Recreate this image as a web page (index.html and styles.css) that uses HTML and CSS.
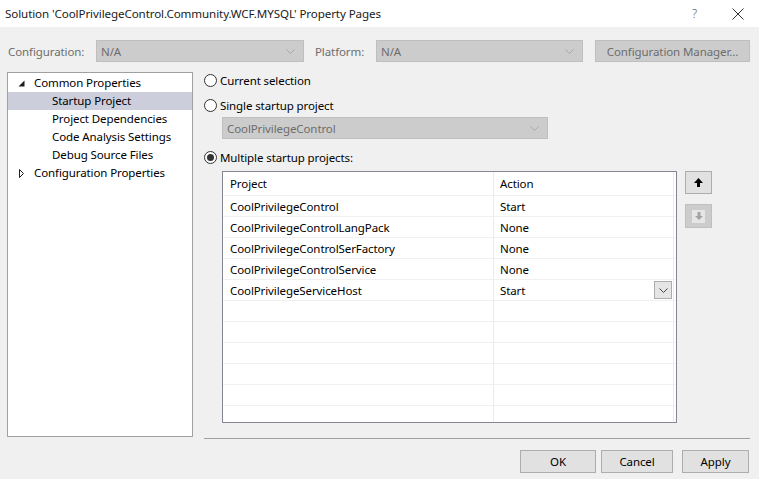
FILE: index.html
```html
<!DOCTYPE html>
<html>
<head>
<meta charset="utf-8">
<link rel="stylesheet" href="styles.css">
</head>
<body>
<div class="window">
  <div class="titlebar">
    <span class="title">Solution 'CoolPrivilegeControl.Community.WCF.MYSQL' Property Pages</span>
    <span class="help">?</span>
    <svg class="close" width="12" height="12" viewBox="0 0 12 12"><path d="M0.5 0.5 L11.5 11.5 M11.5 0.5 L0.5 11.5" stroke="#333" stroke-width="1" fill="none"/></svg>
  </div>

  <div class="toolbar">
    <span class="lbl lbl-cfg">Configuration:</span>
    <div class="combo combo-dis combo-cfg"><span>N/A</span><svg class="chev" width="9" height="5" viewBox="0 0 9 5"><path d="M0.5 0.5 L4.5 4.5 L8.5 0.5" stroke="#a8a8a8" fill="none"/></svg></div>
    <span class="lbl lbl-plat">Platform:</span>
    <div class="combo combo-dis combo-plat"><span>N/A</span><svg class="chev" width="9" height="5" viewBox="0 0 9 5"><path d="M0.5 0.5 L4.5 4.5 L8.5 0.5" stroke="#a8a8a8" fill="none"/></svg></div>
    <div class="btn btn-dis btn-cm">Configuration Manager...</div>
  </div>

  <div class="main">
    <div class="tree">
      <div class="node lvl0"><svg class="exp" width="7" height="7" viewBox="0 0 7 7"><path d="M6.5 0.5 L6.5 6.5 L0.5 6.5 Z" fill="#1e1e1e"/></svg>Common Properties</div>
      <div class="node lvl1 sel">Startup Project</div>
      <div class="node lvl1">Project Dependencies</div>
      <div class="node lvl1">Code Analysis Settings</div>
      <div class="node lvl1">Debug Source Files</div>
      <div class="node lvl0"><svg class="exp" width="7" height="9" viewBox="0 0 7 9"><path d="M1.5 0.5 L5.5 4.5 L1.5 8.5 Z" fill="none" stroke="#1e1e1e"/></svg>Configuration Properties</div>
    </div>

    <div class="right">
      <div class="radio r1"><span class="dot"></span>Current selection</div>
      <div class="radio r2"><span class="dot"></span>Single startup project</div>
      <div class="combo combo-dis combo-single"><span>CoolPrivilegeControl</span><svg class="chev" width="9" height="5" viewBox="0 0 9 5"><path d="M0.5 0.5 L4.5 4.5 L8.5 0.5" stroke="#a8a8a8" fill="none"/></svg></div>
      <div class="radio r3"><span class="dot on"></span>Multiple startup projects:</div>

      <div class="gridarea">
        <div class="grid">
          <div class="row head"><div class="c1">Project</div><div class="c2">Action</div></div>
          <div class="row"><div class="c1">CoolPrivilegeControl</div><div class="c2">Start</div></div>
          <div class="row"><div class="c1">CoolPrivilegeControlLangPack</div><div class="c2">None</div></div>
          <div class="row"><div class="c1">CoolPrivilegeControlSerFactory</div><div class="c2">None</div></div>
          <div class="row"><div class="c1">CoolPrivilegeControlService</div><div class="c2">None</div></div>
          <div class="row"><div class="c1">CoolPrivilegeServiceHost</div><div class="c2 has-dd">Start<span class="dd"><svg width="9" height="5" viewBox="0 0 9 5"><path d="M0.5 0.5 L4.5 4.5 L8.5 0.5" stroke="#444" fill="none"/></svg></span></div></div>
          <div class="row"><div class="c1"></div><div class="c2"></div></div>
          <div class="row"><div class="c1"></div><div class="c2"></div></div>
          <div class="row"><div class="c1"></div><div class="c2"></div></div>
          <div class="row"><div class="c1"></div><div class="c2"></div></div>
          <div class="row"><div class="c1"></div><div class="c2"></div></div>
          <div class="row"><div class="c1"></div><div class="c2"></div></div>
        </div>
        <div class="movers">
          <div class="mv mv-up"><svg width="9" height="9" viewBox="0 0 9 9"><path d="M4.5 0 L9 5 H6 V9 H3 V5 H0 Z" fill="#000"/></svg></div>
          <div class="mv mv-down"><span class="inner"><svg width="8" height="8" viewBox="0 0 8 8"><path d="M4 8 L8 4 H5.5 V0 H2.5 V4 H0 Z" fill="#a3a3a3"/></svg></span></div>
        </div>
      </div>

      <div class="sep"></div>
    </div>
  </div>

  <div class="footer">
    <div class="btn btn-ok">OK</div>
    <div class="btn btn-cancel">Cancel</div>
    <div class="btn btn-apply">Apply</div>
  </div>
</div>
</body>
</html>
```
FILE: styles.css
```css
* { box-sizing: border-box; }
html, body { margin: 0; padding: 0; }
body {
  background: #f0f0f0;
  font-family: "Segoe UI", "Noto Sans", "Open Sans", sans-serif;
  font-size: 11.5px;
  letter-spacing: -0.1px;
  color: #000;
  width: 759px;
  height: 479px;
  overflow: hidden;
}
.window { width: 759px; height: 479px; display: flex; flex-direction: column; }

.titlebar {
  height: 27px;
  background: #fff;
  display: flex;
  align-items: center;
  padding-left: 5px;
}
.title { flex: 1; color: #1a1a1a; white-space: nowrap; font-size: 11.6px; }
.help { color: #555; margin-right: 35px; font-size: 12px; font-weight: 300; }
.close { margin-right: 15px; }

.toolbar {
  margin-top: 13px;
  height: 22px;
  display: flex;
  align-items: center;
}
.lbl { color: #6d6d6d; white-space: nowrap; }
.lbl-cfg { margin-left: 8px; width: 88px; }
.lbl-plat { margin-left: 11px; width: 61px; }
.combo {
  height: 22px;
  display: flex;
  align-items: center;
  justify-content: space-between;
  padding: 0 8px 0 4px;
  border: 1px solid #bfbfbf;
}
.combo-dis { background: #cccccc; color: #6d6d6d; }
.combo-cfg { width: 208px; }
.combo-plat { width: 207px; }
.combo-single { width: 326px; margin-left: 18px; height: 22px; }
.btn {
  height: 23px;
  display: flex;
  align-items: center;
  justify-content: center;
  border: 1px solid #adadad;
  background: #e1e1e1;
  white-space: nowrap;
}
.btn-dis { background: #cccccc; border-color: #bfbfbf; color: #6d6d6d; }
.btn-cm { margin-left: 12px; width: 155px; height: 22px; }

.main { display: flex; margin-top: 10px; }
.tree {
  margin-left: 7px;
  width: 186px;
  height: 365px;
  background: #fff;
  border: 1px solid #a0a0a0;
  padding-top: 1px;
}
.node { height: 18px; line-height: 18px; display: flex; align-items: center; white-space: nowrap; }
.lvl0 { padding-left: 10px; }
.lvl0 .exp { margin-right: 9px; width: 7px; }
.lvl1 { padding-left: 44px; }
.sel { background: #cccedb; }

.right { margin-left: 11px; width: 546px; display: flex; flex-direction: column; }
.radio { height: 16px; display: flex; align-items: center; white-space: nowrap; }
.r2 { margin-top: 9px; }
.combo-single { margin-top: 4px; }
.r3 { margin-top: 10px; }
.dot {
  width: 13px; height: 13px;
  border: 1px solid #333;
  border-radius: 50%;
  background: #fff;
  margin-right: 3px;
  display: flex; align-items: center; justify-content: center;
}
.dot.on::after { content: ""; width: 7px; height: 7px; border-radius: 50%; background: #333; }

.gridarea { display: flex; margin-top: 6px; margin-left: 18px; align-items: flex-start; }
.grid {
  width: 455px;
  height: 252px;
  border: 1px solid #828790;
  background: #fff;
  overflow: hidden;
}
.row { display: flex; height: 21px; border-bottom: 1px solid #f0f0f0; }
.row.head { height: 24px; border-bottom: 1px solid #f0f0f0; }
.c1, .c2 { display: flex; align-items: center; white-space: nowrap; }
.c1 { width: 271px; padding-left: 7px; border-right: 1px solid #e8ebf0; }
.c2 { width: 180px; padding-left: 6px; border-right: 1px solid #e8ebf0; position: relative; }
.has-dd .dd {
  position: absolute;
  right: 1px; top: 1px;
  width: 18px; height: 18px;
  background: #e5e5e5;
  border: 1px solid #acacac;
  display: flex; align-items: center; justify-content: center;
}

.movers { margin-left: 8px; display: flex; flex-direction: column; }
.mv { width: 27px; height: 23px; display: flex; align-items: center; justify-content: center; }
.mv-up { background: #e1e1e1; border: 1px solid #adadad; }
.mv-down { margin-top: 10px; width: 27px; height: 24px; background: #cccccc; border: 1px solid #bfbfbf; }
.mv-down .inner { width: 13px; height: 13px; background: #e6e6e6; display: flex; align-items: center; justify-content: center; }

.sep { margin-top: 15px; height: 1px; background: #a0a0a0; width: 546px; }

.footer { display: flex; margin-top: 11px; margin-left: 520px; }
.btn-ok { width: 76px; }
.btn-cancel { width: 72px; margin-left: 5px; }
.btn-apply { width: 67px; margin-left: 9px; }
```
